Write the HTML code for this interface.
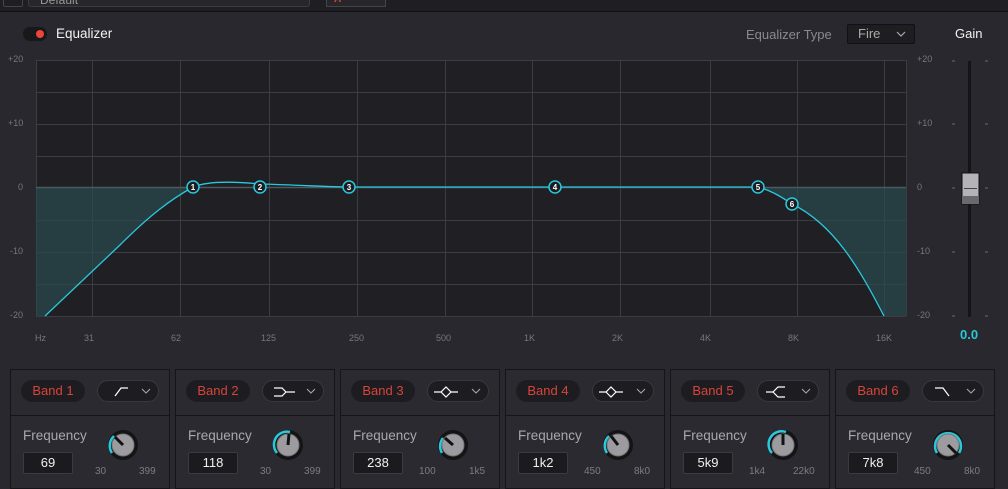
<!DOCTYPE html>
<html><head><meta charset="utf-8"><style>
*{margin:0;padding:0;box-sizing:border-box}
body{width:1008px;height:485px;background:#28282e;font-family:"Liberation Sans",sans-serif;position:relative;overflow:hidden;color:#ddd}
.top{position:absolute;left:0;top:0;width:1008px;height:12px;background:#1f1f23;border-bottom:1px solid #101012}
.a{position:absolute}
.panel{position:absolute;top:369px;width:160px;height:120px;border:1px solid #151518;background:#2a2a30}
.hdr{height:46px;border-bottom:1px solid #151518;position:relative}
.bn{position:absolute;left:10px;top:10px;width:64px;height:22px;border-radius:11px;background:#1d1d21;color:#d9443a;font-size:13px;text-align:center;line-height:22px}
.sel{position:absolute;left:86px;top:10px;width:62px;height:22px;border-radius:11px;background:#1d1d21;border:1px solid #38383e}
.fl{position:absolute;left:12px;top:58px;font-size:13.5px;color:#a8a8ac}
.val{position:absolute;left:12px;top:82px;width:50px;height:22px;background:#1b1b1f;border:1px solid #3a3a40;border-radius:2px;color:#f0f0f0;font-size:13px;text-align:center;line-height:20px}
.rng{position:absolute;top:96px;font-size:10px;color:#7c7c80}
.kn{position:absolute;left:95px;top:58px}
</style></head><body>
<div class="top">
<div class="a" style="left:3px;top:-4px;width:20px;height:11px;border:1px solid #444;border-radius:2px"></div>
<div class="a" style="left:28px;top:-6px;width:282px;height:13px;border:1px solid #3c3c42;border-radius:3px;background:#26262b"></div>
<div class="a" style="left:40px;top:-7px;font-size:12px;color:#999">Default</div>
<div class="a" style="left:326px;top:-6px;width:60px;height:13px;border:1px solid #44444a;background:#26262b"></div>
<div class="a" style="left:334px;top:-6px;font-size:10px;color:#d9443a;font-weight:bold">A</div>
</div>
<div class="a" style="left:23px;top:27px;width:24px;height:14px;border-radius:7px;background:#18181b"></div>
<div class="a" style="left:36px;top:30px;width:8px;height:8px;border-radius:50%;background:#e8463c"></div>
<div class="a" style="left:56px;top:26px;font-size:13.5px;color:#f2f2f2">Equalizer</div>
<div class="a" style="left:746px;top:27px;font-size:13px;color:#8a8a8e">Equalizer Type</div>
<div class="a" style="left:847px;top:24px;width:68px;height:20px;border:1px solid #111;border-radius:2px;background:#1e1e22;color:#aaa;font-size:13px;line-height:18px;padding-left:10px">Fire<svg class="a" style="left:48px;top:6px" width="10" height="7"><path d="M1 1 L5 5 L9 1" stroke="#aaa" fill="none" stroke-width="1.2"/></svg></div>
<div class="a" style="left:955px;top:26px;font-size:13px;color:#f2f2f2">Gain</div>

<svg class="a" style="left:0;top:0" width="1008" height="370">
<rect x="36" y="60" width="870" height="256" fill="#1f1f24"/>
<g stroke="#3c3d42" stroke-width="1">
<line x1="36" y1="60.5" x2="906" y2="60.5"/><line x1="36" y1="92.5" x2="906" y2="92.5"/><line x1="36" y1="124.5" x2="906" y2="124.5"/><line x1="36" y1="156.5" x2="906" y2="156.5"/><line x1="36" y1="220.5" x2="906" y2="220.5"/><line x1="36" y1="252.5" x2="906" y2="252.5"/><line x1="36" y1="284.5" x2="906" y2="284.5"/><line x1="36" y1="316.5" x2="906" y2="316.5"/>
<line x1="36.5" y1="60" x2="36.5" y2="316"/><line x1="92.5" y1="60" x2="92.5" y2="316"/><line x1="180.5" y1="60" x2="180.5" y2="316"/><line x1="269.5" y1="60" x2="269.5" y2="316"/><line x1="357.5" y1="60" x2="357.5" y2="316"/><line x1="445.5" y1="60" x2="445.5" y2="316"/><line x1="532.5" y1="60" x2="532.5" y2="316"/><line x1="620.5" y1="60" x2="620.5" y2="316"/><line x1="710.5" y1="60" x2="710.5" y2="316"/><line x1="797.5" y1="60" x2="797.5" y2="316"/><line x1="884.5" y1="60" x2="884.5" y2="316"/><line x1="906.5" y1="60" x2="906.5" y2="316"/>
</g>
<path d="M36 187 L193 187 C170 200 150 215 120 245 L45 316 L36 316 Z" fill="#2a4a4e" fill-opacity="0.7"/>
<path d="M758 187 L906 187 L906 316 L884 316 C860 270 835 225 792 204 C780 196 770 190 758 187 Z" fill="#2a4a4e" fill-opacity="0.7"/>
<line x1="36" y1="187.5" x2="906" y2="187.5" stroke="#4a5a5e" stroke-width="1.5"/>
<path d="M45 316 L120 245 C150 215 170 200 193 187 C210 180 240 182 260 184 C300 185 330 187 349 187 L758 187 C770 190 780 196 792 204 C835 225 860 270 884 316" fill="none" stroke="#2ac8dc" stroke-width="1.3"/>
<g fill="#1c1c20" stroke="#2ac8dc" stroke-width="1.5">
<circle cx="193" cy="187" r="6"/><circle cx="260" cy="187" r="6"/><circle cx="349" cy="187" r="6"/><circle cx="555" cy="187" r="6"/><circle cx="758" cy="187" r="6"/><circle cx="792" cy="204" r="6"/>
</g>
<g fill="#fff" font-size="8" font-weight="bold" text-anchor="middle" font-family="Liberation Sans">
<text x="193" y="190">1</text><text x="260" y="190">2</text><text x="349" y="190">3</text><text x="555" y="190">4</text><text x="758" y="190">5</text><text x="792" y="207">6</text>
</g>
<g fill="#77777b" font-size="9" font-family="Liberation Sans">
<text x="8" y="62">+20</text><text x="8" y="126">+10</text><text x="18" y="190">0</text><text x="10" y="254">-10</text><text x="10" y="318">-20</text>
<text x="917" y="62">+20</text><text x="917" y="126">+10</text><text x="917" y="190">0</text><text x="917" y="254">-10</text><text x="917" y="318">-20</text>
<text x="35" y="341">Hz</text><text x="84" y="341">31</text><text x="171" y="341">62</text><text x="261" y="341">125</text><text x="349" y="341">250</text><text x="436" y="341">500</text><text x="524" y="341">1K</text><text x="612" y="341">2K</text><text x="700" y="341">4K</text><text x="788" y="341">8K</text><text x="876" y="341">16K</text>
</g>
<g stroke="#6a6a6e"><line x1="952" y1="61" x2="955" y2="61"/><line x1="985" y1="61" x2="988" y2="61"/><line x1="952" y1="124" x2="955" y2="124"/><line x1="985" y1="124" x2="988" y2="124"/><line x1="952" y1="188" x2="955" y2="188"/><line x1="985" y1="188" x2="988" y2="188"/><line x1="952" y1="252" x2="955" y2="252"/><line x1="985" y1="252" x2="988" y2="252"/><line x1="952" y1="316" x2="955" y2="316"/><line x1="985" y1="316" x2="988" y2="316"/></g>
<rect x="968" y="61" width="3" height="256" fill="#151517"/>
<rect x="962" y="173" width="17" height="31" fill="#b4b4b8" stroke="#111"/>
<rect x="962" y="196" width="17" height="8" fill="#6a6a6e"/>
<line x1="964" y1="188.5" x2="977" y2="188.5" stroke="#444"/>
<text x="960" y="339" fill="#2ac8dc" font-size="13" font-weight="bold" font-family="Liberation Sans">0.0</text>
</svg>

<div class="panel" style="left:10px"><div class="hdr"><div class="bn">Band 1</div><div class="sel"><svg width="60" height="20"><path d="M17 15 L23 7 L30 7" stroke="#fff" fill="none" stroke-width="1.2"/><path d="M44 8 L48 12 L52 8" stroke="#aaa" fill="none"/></svg></div></div>
<div class="fl">Frequency</div><div class="val">69</div><div class="rng" style="left:84px">30</div><div class="rng" style="left:128px">399</div>
<svg class="kn" width="36" height="36"><circle cx="17" cy="17" r="15" fill="#141416"/><path d="M6 25 A13 13 0 0 1 8 8" stroke="#2ac8dc" stroke-width="2.5" fill="none"/><circle cx="17" cy="17" r="11" fill="#9c9ca0" stroke="#777"/><line x1="17" y1="17" x2="9" y2="9" stroke="#111" stroke-width="3"/></svg></div>

<div class="panel" style="left:175px"><div class="hdr"><div class="bn">Band 2</div><div class="sel"><svg width="60" height="20"><path d="M11 7 L19 7 L23 11 L32 11 M23 11 L19 15 L11 15" stroke="#fff" fill="none" stroke-width="1.2"/><path d="M44 8 L48 12 L52 8" stroke="#aaa" fill="none"/></svg></div></div>
<div class="fl">Frequency</div><div class="val">118</div><div class="rng" style="left:84px">30</div><div class="rng" style="left:128px">399</div>
<svg class="kn" width="36" height="36"><circle cx="17" cy="17" r="15" fill="#141416"/><path d="M6 25 A13 13 0 0 1 19 4" stroke="#2ac8dc" stroke-width="2.5" fill="none"/><circle cx="17" cy="17" r="11" fill="#9c9ca0" stroke="#777"/><line x1="17" y1="17" x2="18" y2="6" stroke="#111" stroke-width="3"/></svg></div>

<div class="panel" style="left:340px"><div class="hdr"><div class="bn">Band 3</div><div class="sel"><svg width="60" height="20"><path d="M6 11 L13 11 L18 6 L23 11 L18 16 L13 11 M23 11 L30 11" stroke="#fff" fill="none" stroke-width="1.2"/><path d="M44 8 L48 12 L52 8" stroke="#aaa" fill="none"/></svg></div></div>
<div class="fl">Frequency</div><div class="val">238</div><div class="rng" style="left:78px">100</div><div class="rng" style="left:128px">1k5</div>
<svg class="kn" width="36" height="36"><circle cx="17" cy="17" r="15" fill="#141416"/><path d="M6 25 A13 13 0 0 1 7 10" stroke="#2ac8dc" stroke-width="2.5" fill="none"/><circle cx="17" cy="17" r="11" fill="#9c9ca0" stroke="#777"/><line x1="17" y1="17" x2="9" y2="10" stroke="#111" stroke-width="3"/></svg></div>

<div class="panel" style="left:505px"><div class="hdr"><div class="bn">Band 4</div><div class="sel"><svg width="60" height="20"><path d="M6 11 L13 11 L18 6 L23 11 L18 16 L13 11 M23 11 L30 11" stroke="#fff" fill="none" stroke-width="1.2"/><path d="M44 8 L48 12 L52 8" stroke="#aaa" fill="none"/></svg></div></div>
<div class="fl">Frequency</div><div class="val">1k2</div><div class="rng" style="left:78px">450</div><div class="rng" style="left:128px">8k0</div>
<svg class="kn" width="36" height="36"><circle cx="17" cy="17" r="15" fill="#141416"/><path d="M6 25 A13 13 0 0 1 8 8" stroke="#2ac8dc" stroke-width="2.5" fill="none"/><circle cx="17" cy="17" r="11" fill="#9c9ca0" stroke="#777"/><line x1="17" y1="17" x2="10" y2="8" stroke="#111" stroke-width="3"/></svg></div>

<div class="panel" style="left:670px"><div class="hdr"><div class="bn">Band 5</div><div class="sel"><svg width="60" height="20"><path d="M8 11 L15 11 L20 6 L27 6 M15 11 L20 16 L27 16" stroke="#fff" fill="none" stroke-width="1.2"/><path d="M44 8 L48 12 L52 8" stroke="#aaa" fill="none"/></svg></div></div>
<div class="fl">Frequency</div><div class="val">5k9</div><div class="rng" style="left:78px">1k4</div><div class="rng" style="left:122px">22k0</div>
<svg class="kn" width="36" height="36"><circle cx="17" cy="17" r="15" fill="#141416"/><path d="M6 25 A13 13 0 0 1 20 4" stroke="#2ac8dc" stroke-width="2.5" fill="none"/><circle cx="17" cy="17" r="11" fill="#9c9ca0" stroke="#777"/><line x1="17" y1="17" x2="17" y2="6" stroke="#111" stroke-width="3"/></svg></div>

<div class="panel" style="left:835px"><div class="hdr"><div class="bn">Band 6</div><div class="sel"><svg width="60" height="20"><path d="M12 7 L20 7 L26 15" stroke="#fff" fill="none" stroke-width="1.2"/><path d="M44 8 L48 12 L52 8" stroke="#aaa" fill="none"/></svg></div></div>
<div class="fl">Frequency</div><div class="val">7k8</div><div class="rng" style="left:78px">450</div><div class="rng" style="left:128px">8k0</div>
<svg class="kn" width="36" height="36"><circle cx="17" cy="17" r="15" fill="#141416"/><path d="M6 25 A13 13 0 1 1 28 25" stroke="#2ac8dc" stroke-width="2.5" fill="none"/><circle cx="17" cy="17" r="11" fill="#9c9ca0" stroke="#777"/><line x1="17" y1="17" x2="25" y2="25" stroke="#111" stroke-width="3"/></svg></div>
</body></html>
